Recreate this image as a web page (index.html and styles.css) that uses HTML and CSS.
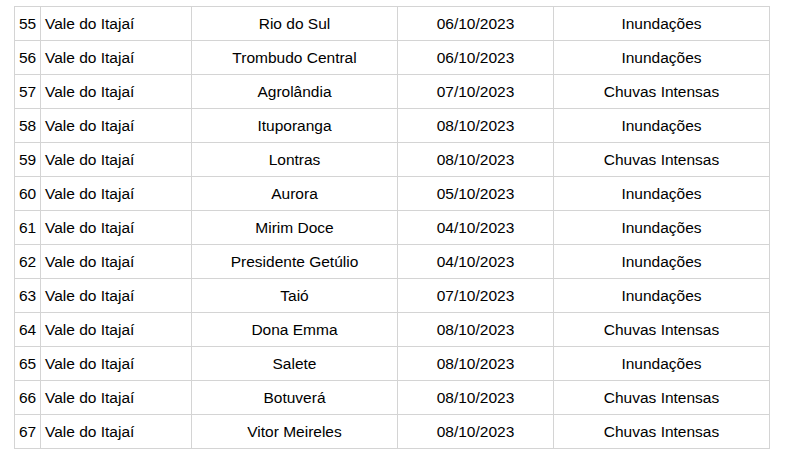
FILE: index.html
```html
<!DOCTYPE html>
<html lang="pt-BR">
<head>
<meta charset="utf-8">
<link rel="stylesheet" href="styles.css">
</head>
<body>
<table class="grid">
  <colgroup>
    <col class="c-num"><col class="c-reg"><col class="c-mun"><col class="c-date"><col class="c-type">
  </colgroup>
  <tbody>
    <tr><td class="num">55</td><td class="reg">Vale do Itajaí</td><td>Rio do Sul</td><td>06/10/2023</td><td>Inundações</td></tr>
    <tr><td class="num">56</td><td class="reg">Vale do Itajaí</td><td>Trombudo Central</td><td>06/10/2023</td><td>Inundações</td></tr>
    <tr><td class="num">57</td><td class="reg">Vale do Itajaí</td><td>Agrolândia</td><td>07/10/2023</td><td>Chuvas Intensas</td></tr>
    <tr><td class="num">58</td><td class="reg">Vale do Itajaí</td><td>Ituporanga</td><td>08/10/2023</td><td>Inundações</td></tr>
    <tr><td class="num">59</td><td class="reg">Vale do Itajaí</td><td>Lontras</td><td>08/10/2023</td><td>Chuvas Intensas</td></tr>
    <tr><td class="num">60</td><td class="reg">Vale do Itajaí</td><td>Aurora</td><td>05/10/2023</td><td>Inundações</td></tr>
    <tr><td class="num">61</td><td class="reg">Vale do Itajaí</td><td>Mirim Doce</td><td>04/10/2023</td><td>Inundações</td></tr>
    <tr><td class="num">62</td><td class="reg">Vale do Itajaí</td><td>Presidente Getúlio</td><td>04/10/2023</td><td>Inundações</td></tr>
    <tr><td class="num">63</td><td class="reg">Vale do Itajaí</td><td>Taió</td><td>07/10/2023</td><td>Inundações</td></tr>
    <tr><td class="num">64</td><td class="reg">Vale do Itajaí</td><td>Dona Emma</td><td>08/10/2023</td><td>Chuvas Intensas</td></tr>
    <tr><td class="num">65</td><td class="reg">Vale do Itajaí</td><td>Salete</td><td>08/10/2023</td><td>Inundações</td></tr>
    <tr><td class="num">66</td><td class="reg">Vale do Itajaí</td><td>Botuverá</td><td>08/10/2023</td><td>Chuvas Intensas</td></tr>
    <tr><td class="num">67</td><td class="reg">Vale do Itajaí</td><td>Vitor Meireles</td><td>08/10/2023</td><td>Chuvas Intensas</td></tr>
  </tbody>
</table>
</body>
</html>
```

FILE: styles.css
```css
html, body {
  margin: 0;
  background: #ffffff;
}
body {
  padding: 6px 0 0 14px;
  font-family: "Liberation Sans", Arial, sans-serif;
  font-size: 15.5px;
  color: #000000;
}
.grid {
  border-collapse: collapse;
  table-layout: fixed;
  width: 755px;
}
.c-num { width: 26px; }
.c-reg { width: 151px; }
.c-mun { width: 206px; }
.c-date { width: 156px; }
.c-type { width: 216px; }
.grid td {
  border: 1px solid #d4d4d4;
  height: 33px;
  padding: 0 4px;
  text-align: center;
  vertical-align: middle;
  white-space: nowrap;
  line-height: 18px;
}
.grid td.num,
.grid td.reg {
  text-align: left;
}
.grid td.num {
  padding: 0 1px 0 4px;
}
```
